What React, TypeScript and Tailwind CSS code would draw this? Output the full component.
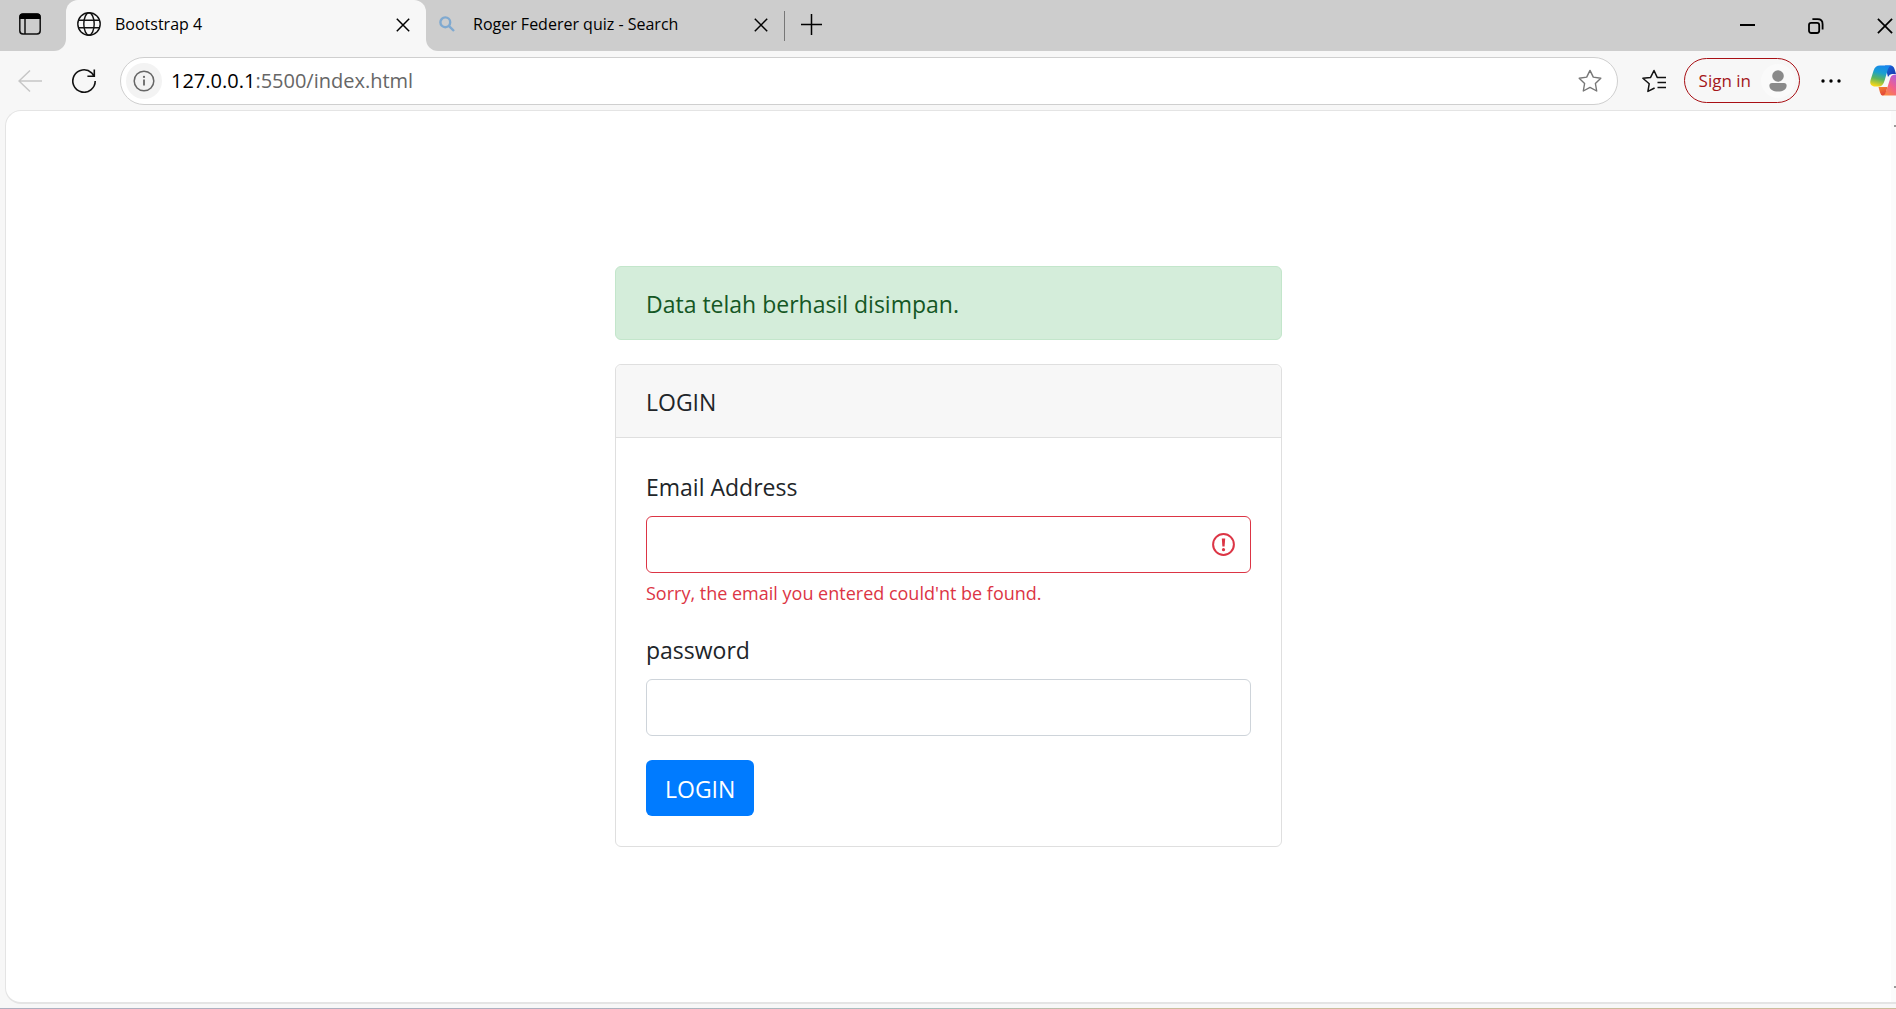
import React from "react";

const FONT = "font-['Open_Sans','Noto_Sans',sans-serif]";

function CloseIcon({ size }: { size: number }) {
  return (
    <svg width={size} height={size} viewBox="0 0 14 14" fill="none" stroke="currentColor" strokeWidth="1.5" aria-hidden="true">
      <path d="M0.8 0.8 13.2 13.2M13.2 0.8 0.8 13.2" />
    </svg>
  );
}

function TabStrip() {
  return (
    <header className="flex h-[51px] text-base text-black">
      <div className="flex w-[66px] shrink-0 rounded-br-xl bg-[#cdcdcd]">
        <button type="button" aria-label="Tab actions" className="mt-3 ml-[18px] h-6 w-6">
          <svg width="24" height="24" viewBox="0 0 24 24" fill="none" stroke="#111" strokeWidth="1.5">
            <rect x="1.8" y="2" width="20.4" height="20" rx="3.2" />
            <path d="M1.5 7V4.8Q1.5 1.6 4.8 1.6H19.2Q22.5 1.6 22.5 4.8V7Z" fill="#000" stroke="none" />
            <path d="M7 7V22" />
          </svg>
        </button>
      </div>
      <div className="flex w-[360px] shrink-0 bg-[#cdcdcd]">
        <div className="flex flex-1 items-center rounded-t-xl bg-[#f7f7f7] pr-4 pb-[3px] pl-[11px]">
          <svg width="24" height="24" viewBox="0 0 24 24" fill="none" stroke="#111" strokeWidth="1.4" aria-hidden="true">
            <circle cx="12" cy="12" r="11.2" />
            <ellipse cx="12" cy="12" rx="5.2" ry="11.2" />
            <path d="M1.5 8.3H22.5M1.5 15.7H22.5" />
          </svg>
          <span className="ml-[14px] flex-1">Bootstrap 4</span>
          <button type="button" aria-label="Close tab" className="pt-px"><CloseIcon size={14} /></button>
        </div>
      </div>
      <div className="flex flex-1 items-center justify-between rounded-bl-xl bg-[#cdcdcd] pb-[3px]">
        <div className="flex items-center pl-[13px]">
          <svg width="16" height="16" viewBox="0 0 16 16" fill="none" stroke="#7fa9d0" strokeWidth="2.4" aria-hidden="true">
            <circle cx="6.3" cy="6.3" r="4.9" />
            <path d="M9.8 9.8 15 15" />
          </svg>
          <span className="ml-[18px] w-[281px]">Roger Federer quiz - Search</span>
          <button type="button" aria-label="Close tab" className="pt-px"><CloseIcon size={14} /></button>
          <span className="mt-1 ml-4 h-[30px] w-px bg-[#777]" />
          <button type="button" aria-label="New tab" className="ml-4">
            <svg width="21" height="21" viewBox="0 0 21 21" stroke="#000" strokeWidth="1.5">
              <path d="M0 10.5H21M10.5 0V21" />
            </svg>
          </button>
        </div>
        <div className="flex items-center gap-[53px] pt-[3px] pr-[3px]">
          <button type="button" aria-label="Minimize">
            <svg width="15" height="16" viewBox="0 0 15 16" stroke="#000" strokeWidth="2"><path d="M0 7H15" /></svg>
          </button>
          <button type="button" aria-label="Restore">
            <svg width="16" height="16" viewBox="0 0 16 16" fill="none" stroke="#000" strokeWidth="1.8">
              <rect x="1" y="4.8" width="10.2" height="10.2" rx="2.2" />
              <path d="M4.4 1.2H9.6Q14.6 1.2 14.6 6.2V11.4" />
            </svg>
          </button>
          <button type="button" aria-label="Close window"><CloseIcon size={16} /></button>
        </div>
      </div>
    </header>
  );
}

const STAR = "M12 1.4 15.3 8.1 22.8 9.2 17.4 14.5 18.7 22 12 18.4 5.3 22 6.6 14.5 1.2 9.2 8.7 8.1Z";

function Toolbar() {
  return (
    <nav className="flex h-[59px] items-center pl-[18px]">
      <button type="button" aria-label="Back">
        <svg width="24" height="24" viewBox="0 0 24 24" fill="none" stroke="#c6c6c6" strokeWidth="1.5">
          <path d="M24 12H1M12 1.5 1 12 12 22.5" />
        </svg>
      </button>
      <button type="button" aria-label="Refresh" className="ml-[30px]">
        <svg width="24" height="24" viewBox="0 0 24 24" fill="none" stroke="#111" strokeWidth="1.6">
          <path d="M23.2 12A11.2 11.2 0 1 1 19.6 3.8L22 6.9M22.3 0.5V7.3H15.4" />
        </svg>
      </button>
      <div className="ml-6 flex h-12 flex-1 items-center rounded-full border border-[#cfcfcf] bg-white pr-[15px] pl-[5px]">
        <button type="button" aria-label="Site information" className="flex size-9 items-center justify-center rounded-full bg-[#f3f3f3]">
          <svg width="22" height="22" viewBox="0 0 22 22" fill="none" stroke="#666" strokeWidth="1.5">
            <circle cx="11" cy="11" r="9.8" />
            <path d="M11 9.6V15.6" strokeWidth="1.8" />
            <circle cx="11" cy="6.9" r="1.1" fill="#666" stroke="none" />
          </svg>
        </button>
        <div className="ml-[9px] flex-1 text-xl text-[#666]">
          <span className="text-black">127.0.0.1</span>:5500/index.html
        </div>
        <button type="button" aria-label="Add to favorites">
          <svg width="24" height="24" viewBox="0 0 24 24" fill="none" stroke="#777" strokeWidth="1.4" strokeLinejoin="round"><path d={STAR} /></svg>
        </button>
      </div>
      <button type="button" aria-label="Favorites" className="ml-6">
        <svg width="24" height="24" viewBox="0 0 24 24" fill="none" stroke="#111" strokeWidth="1.5" strokeLinejoin="round">
          <path d="M12.6 19 5.9 22.4 7.2 14.8 0.9 9.3 8.6 8.4 12 1.5 15.2 8.4H24M15.5 13.5H24M15.5 18.6H24" />
        </svg>
      </button>
      <button type="button" className="ml-[18px] flex h-[45px] items-center gap-[10px] rounded-full border border-[#a80f14] pr-1 pl-[14px] text-[17px] text-[#a4161a]">
        Sign in
        <span className="flex size-[34px] items-center justify-center rounded-full bg-[#fafafa]">
          <svg width="18" height="22" viewBox="0 0 18 22" fill="#8a8a8a" aria-hidden="true">
            <circle cx="9" cy="6" r="5.8" />
            <path d="M3 13H15Q17.6 13 17.6 15.6C17.6 19.6 13.8 21.6 9 21.6S0.4 19.6 0.4 15.6Q0.4 13 3 13Z" />
          </svg>
        </span>
      </button>
      <button type="button" aria-label="Settings and more" className="ml-5">
        <svg width="22" height="6" viewBox="0 0 22 6"><circle cx="3" cy="3" r="1.7" /><circle cx="11" cy="3" r="1.7" /><circle cx="19" cy="3" r="1.7" /></svg>
      </button>
      <button type="button" aria-label="Copilot" className="ml-7 w-[26px] overflow-hidden">
        <svg width="26" height="31" viewBox="0 0 26 31">
          <defs>
            <linearGradient id="cpBlue" x1="0.6" y1="0" x2="0.35" y2="1">
              <stop offset="0" stopColor="#1787ee" />
              <stop offset="0.35" stopColor="#1a9fd0" />
              <stop offset="0.65" stopColor="#5cb45f" />
              <stop offset="1" stopColor="#f7d616" />
            </linearGradient>
            <linearGradient id="cpNavy" x1="0" y1="0" x2="1" y2="1">
              <stop offset="0" stopColor="#1668e0" />
              <stop offset="1" stopColor="#1a35a8" />
            </linearGradient>
            <linearGradient id="cpWarm" x1="0.9" y1="0" x2="0.3" y2="1">
              <stop offset="0" stopColor="#b45fdc" />
              <stop offset="0.5" stopColor="#f2608c" />
              <stop offset="1" stopColor="#fb8a3c" />
            </linearGradient>
            <linearGradient id="cpRed" x1="0" y1="0" x2="0.4" y2="1">
              <stop offset="0" stopColor="#f5832e" />
              <stop offset="1" stopColor="#e2453a" />
            </linearGradient>
          </defs>
          <path d="M15 0.5H20.5Q23.5 0.7 24.5 4L26 9H22Q19.5 9 18 12Z" fill="url(#cpNavy)" />
          <path d="M10 0.5H21.5Q18.8 1.2 17.8 4.6L14.6 15.4Q13 21 9.5 21.4H4Q-0.8 20.8 0.5 15.2L3.6 5.6Q5.2 0.5 10 0.5Z" fill="url(#cpBlue)" />
          <path d="M26 9.5V30.5H12Q15.6 29 16.6 25L20.4 12.8Q21.6 9.5 26 9.5Z" fill="url(#cpWarm)" />
          <path d="M8.5 22H17.4L16.6 25Q15.6 30 12.6 30.5Q10.6 30 10 27.5Z" fill="url(#cpRed)" />
        </svg>
      </button>
    </nav>
  );
}

function LoginPage() {
  return (
    <main className="flex flex-1 justify-center text-[23px] leading-9 text-[#212529]">
      <div className="mt-[155px] w-full max-w-[667px]">
        <div role="alert" className="mb-6 rounded-md border border-[#c3e6cb] bg-[#d4edda] px-[30px] pt-[19px] pb-[17px] text-[#155724]">
          Data telah berhasil disimpan.
        </div>
        <section className="rounded-md border border-[#dfdfdf] bg-white">
          <h1 className="rounded-t-md border-b border-[#dfdfdf] bg-[#f7f7f7] px-[30px] pt-[19px] pb-[17px]">LOGIN</h1>
          <form className="px-[30px] pt-[31px] pb-[30px]" onSubmit={(e) => e.preventDefault()}>
            <div className="mb-[25px]">
              <label htmlFor="email" className="mb-[11px] block">Email Address</label>
              <div className="relative">
                <input id="email" type="email" aria-invalid="true" aria-describedby="email-error" className="block h-[57px] w-full rounded-md border border-[#dc3545] px-4 pr-14 outline-none" />
                <svg className="absolute inset-y-0 right-4 my-auto" width="23" height="23" viewBox="0 0 23 23" fill="none" stroke="#dc3545" strokeWidth="2" aria-hidden="true">
                  <circle cx="11.5" cy="11.5" r="10.4" />
                  <path d="M9.8 5.6H13.2L12.6 13.6H10.4Z" fill="#dc3545" stroke="none" />
                  <circle cx="11.5" cy="16.7" r="1.6" fill="#dc3545" stroke="none" />
                </svg>
              </div>
              <p id="email-error" className="mt-[7px] text-lg leading-[27px] text-[#dc3545]">Sorry, the email you entered could'nt be found.</p>
            </div>
            <div className="mb-6">
              <label htmlFor="password" className="mb-[11px] block">password</label>
              <input id="password" type="password" className="block h-[57px] w-full rounded-md border border-[#ced4da] px-4 outline-none" />
            </div>
            <button type="submit" className="flex h-14 items-center rounded-md bg-[#007bff] px-[19px] pt-0.5 text-white">LOGIN</button>
          </form>
        </section>
      </div>
    </main>
  );
}

export default function App() {
  return (
    <div className={`flex min-h-screen flex-col overflow-hidden bg-[#f7f7f7] ${FONT}`}>
      <TabStrip />
      <Toolbar />
      <div className="mb-1 ml-[5px] flex flex-1 overflow-hidden rounded-l-2xl border border-r-0 border-b-2 border-[#e4e4e4] bg-white">
        <LoginPage />
        <div className="flex w-[5px] flex-col items-end justify-between bg-[#fbfbfb] py-[14px]">
          <span className="h-0.5 w-0.5 bg-[#999]" />
          <span className="h-0.5 w-0.5 bg-[#999]" />
        </div>
      </div>
      <div className="h-px bg-linear-to-r from-[#aeb0bf] from-30% via-[#a9c0bd] to-[#cbbd9c] to-60%" />
    </div>
  );
}
